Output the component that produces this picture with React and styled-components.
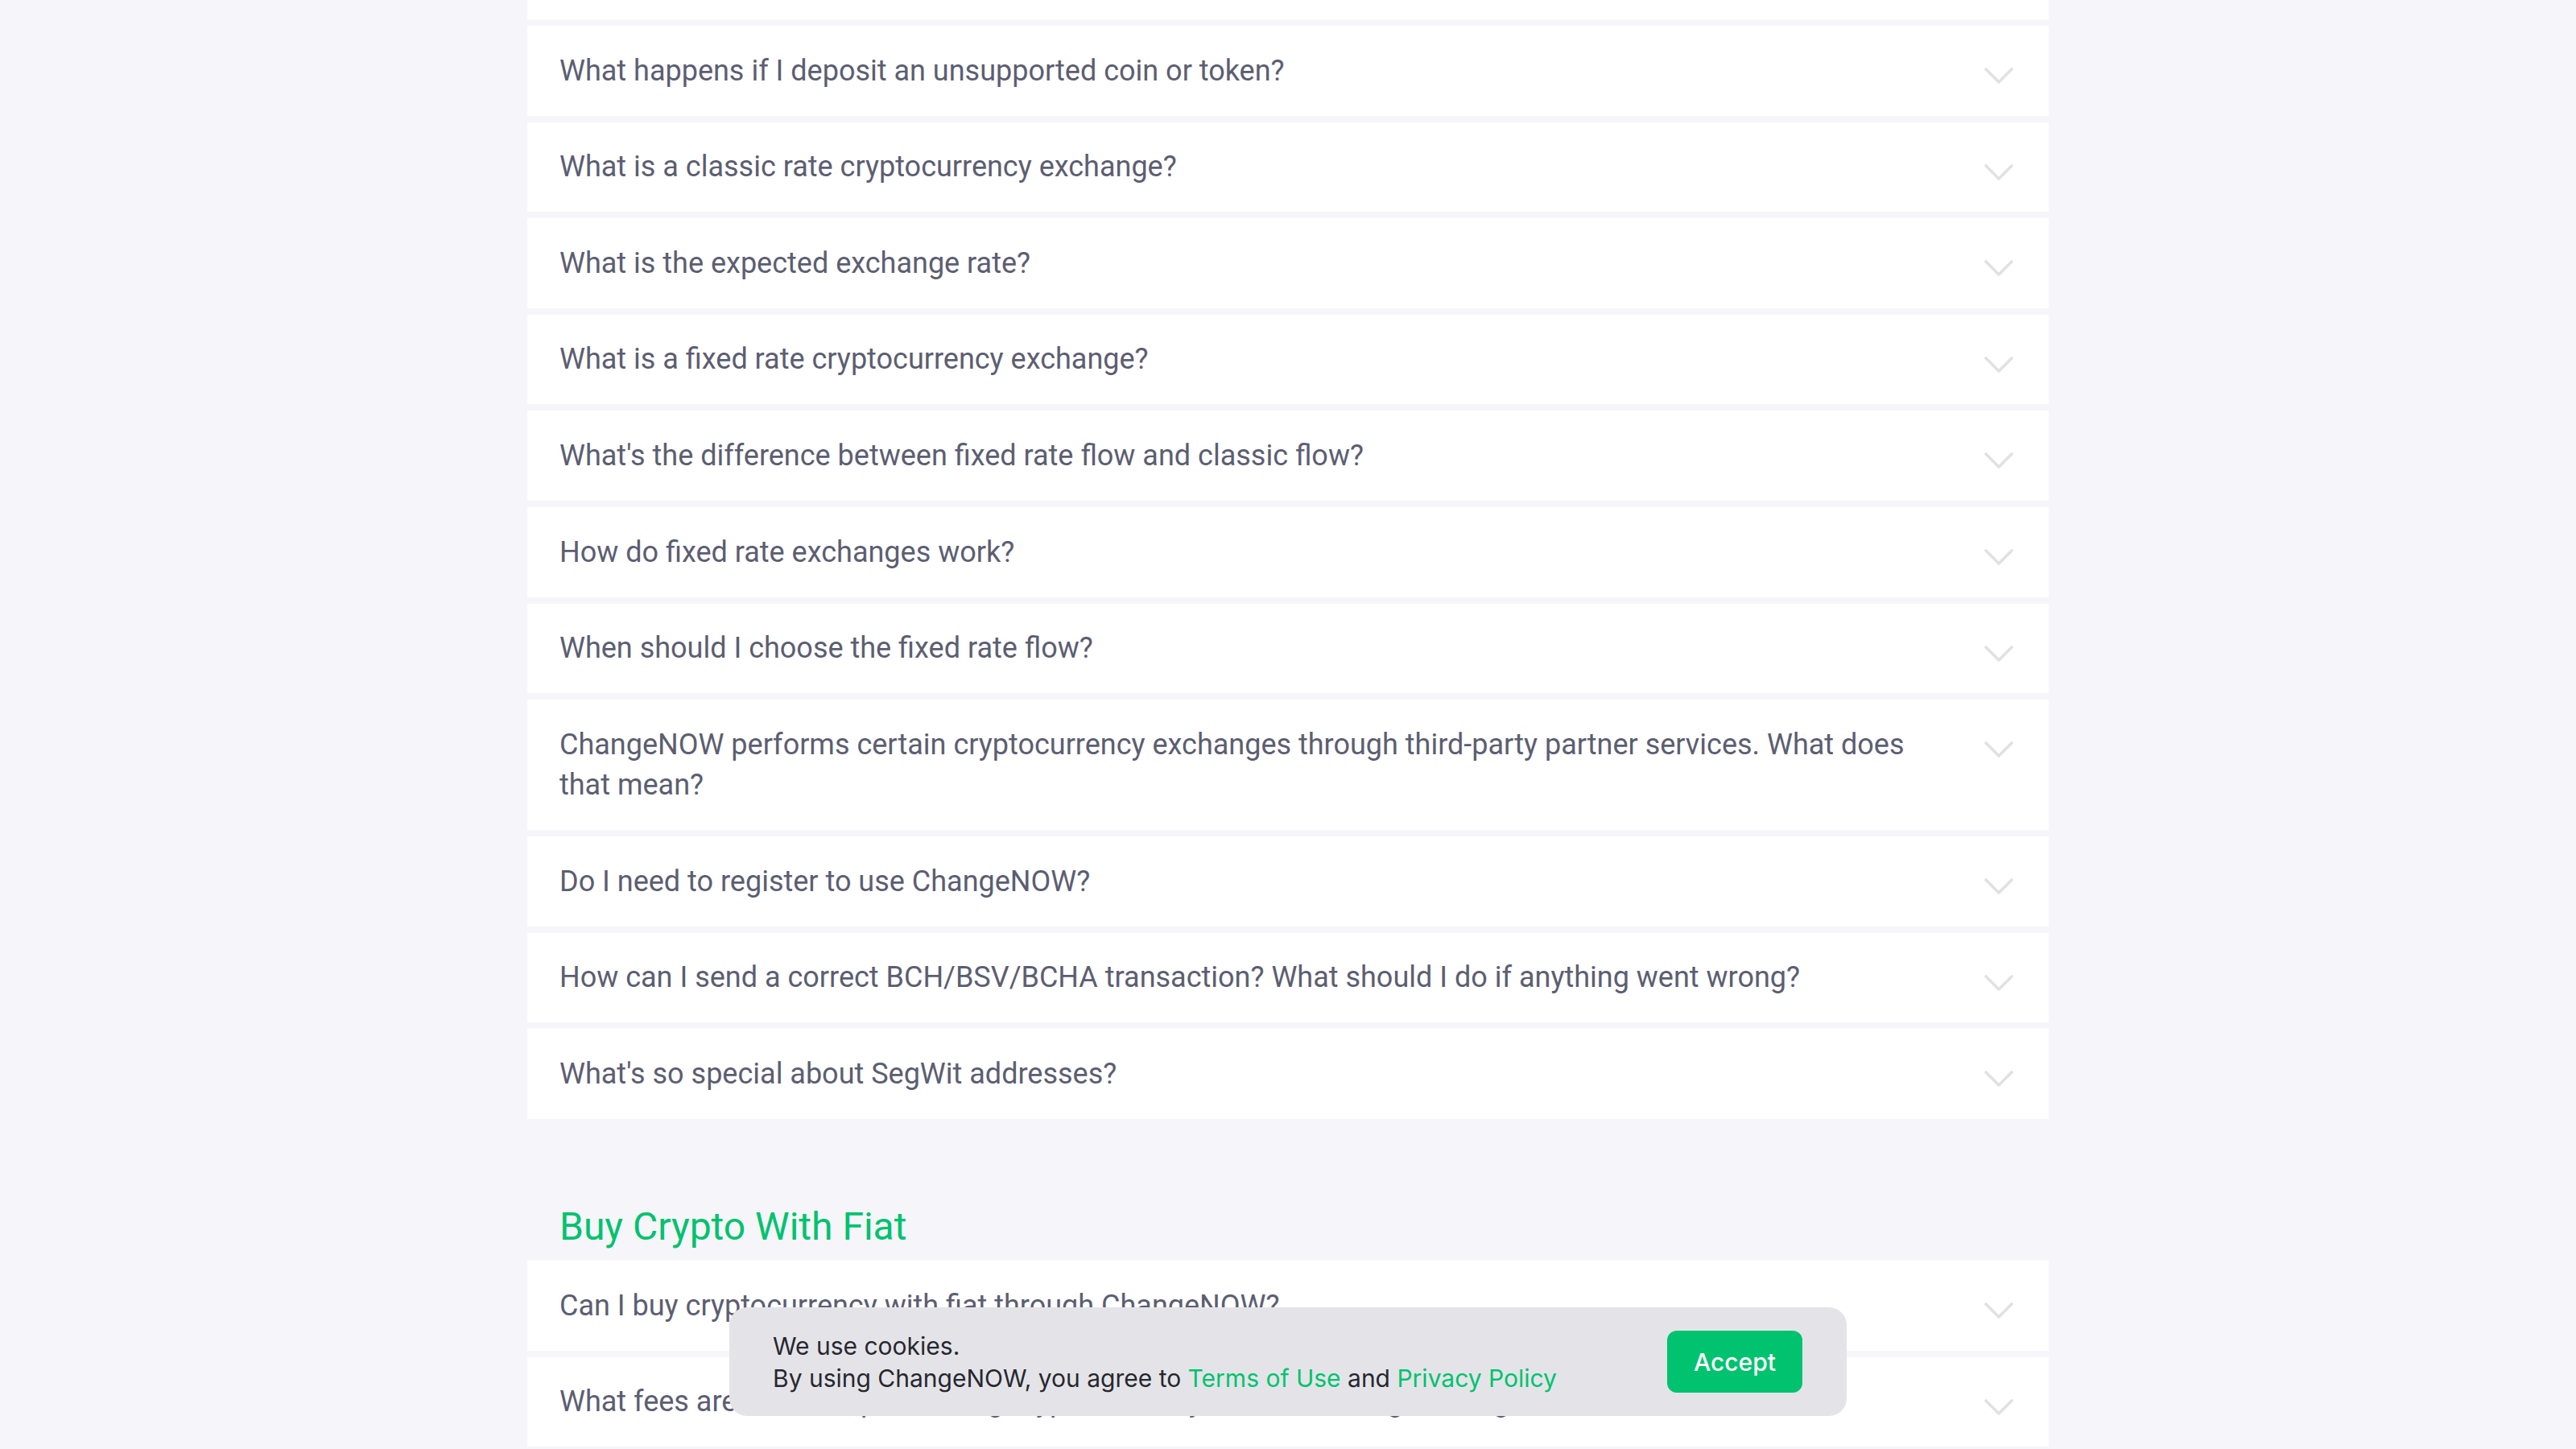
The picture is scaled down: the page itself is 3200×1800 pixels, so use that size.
import React from 'react';
import styled, { createGlobalStyle } from 'styled-components';

const GlobalStyle = createGlobalStyle`
  html, body {
    margin: 0;
    padding: 0;
    background: #f6f5f9;
    font-family: Roboto, "Noto Sans", Arial, sans-serif;
  }
`;

const Page = styled.div`
  display: flex;
  flex-direction: column;
  align-items: center;
`;

const Container = styled.main`
  width: 1890px;
  margin-top: -87.6px;
  padding-bottom: 240px;
`;

const Section = styled.section`
  display: flex;
  flex-direction: column;
`;

const SectionTitle = styled.h2`
  margin: 105px 0 13.6px;
  padding: 0 40px;
  font-size: 48px;
  line-height: 57.6px;
  font-weight: 400;
  color: #00c26f;
`;

const FaqList = styled.div`
  display: flex;
  flex-direction: column;
  gap: 8px;
`;

const FaqItem = styled.div`
  display: flex;
  align-items: flex-start;
  gap: 60px;
  padding: 30.6px 44px 30.6px 40px;
  background: #ffffff;
  cursor: pointer;
`;

const Question = styled.div`
  flex: 1;
  font-size: 36px;
  line-height: 50.4px;
  color: #5c5e71;
`;

const Chevron = styled.svg`
  flex: none;
  width: 36px;
  height: 20px;
  margin-top: 21.5px;
`;

const CookieBar = styled.div`
  position: fixed;
  bottom: 41px;
  left: calc(50% - 694px);
  width: 1388px;
  box-sizing: border-box;
  display: flex;
  align-items: center;
  justify-content: space-between;
  padding: 27.5px 55px 27.5px 54px;
  background: #e4e4e8;
  border-radius: 22px;
  font-family: Inter, Roboto, sans-serif;
`;

const CookieText = styled.div`
  font-size: 30px;
  line-height: 40px;
  color: #27272f;
`;

const CookieLink = styled.a`
  color: #00c26f;
  text-decoration: none;
`;

const AcceptButton = styled.button`
  border: none;
  border-radius: 12px;
  background: #00c26f;
  color: #ffffff;
  font-family: inherit;
  font-size: 30px;
  font-weight: 500;
  line-height: 40px;
  padding: 18.5px 33px;
  cursor: pointer;
`;

const general = [
  'How long does it take to exchange coins?',
  'What happens if I deposit an unsupported coin or token?',
  'What is a classic rate cryptocurrency exchange?',
  'What is the expected exchange rate?',
  'What is a fixed rate cryptocurrency exchange?',
  "What's the difference between fixed rate flow and classic flow?",
  'How do fixed rate exchanges work?',
  'When should I choose the fixed rate flow?',
  'ChangeNOW performs certain cryptocurrency exchanges through third-party partner services. What does that mean?',
  'Do I need to register to use ChangeNOW?',
  'How can I send a correct BCH/BSV/BCHA transaction? What should I do if anything went wrong?',
  "What's so special about SegWit addresses?",
];

const fiat = [
  'Can I buy cryptocurrency with fiat through ChangeNOW?',
  'What fees are there for purchasing cryptocurrency with fiat through ChangeNOW?',
  'Which payment methods can I use to buy crypto?',
];

const ChevronIcon = () => (
  <Chevron viewBox="0 0 36 20" fill="none">
    <polyline
      points="2,2 18,18 34,2"
      stroke="#e1e1e5"
      strokeWidth="3.6"
      strokeLinecap="round"
      strokeLinejoin="round"
    />
  </Chevron>
);

const Faq = ({ items }) => (
  <FaqList>
    {items.map((q) => (
      <FaqItem key={q}>
        <Question>{q}</Question>
        <ChevronIcon />
      </FaqItem>
    ))}
  </FaqList>
);

const App = () => {
  return (
    <Page>
      <GlobalStyle />
      <Container>
        <Section>
          <Faq items={general} />
        </Section>
        <Section>
          <SectionTitle>Buy Crypto With Fiat</SectionTitle>
          <Faq items={fiat} />
        </Section>
      </Container>
      <CookieBar>
        <CookieText>
          We use cookies.
          <br />
          By using ChangeNOW, you agree to <CookieLink href="#">Terms of Use</CookieLink> and{' '}
          <CookieLink href="#">Privacy Policy</CookieLink>
        </CookieText>
        <AcceptButton>Accept</AcceptButton>
      </CookieBar>
    </Page>
  );
};

export default App;
